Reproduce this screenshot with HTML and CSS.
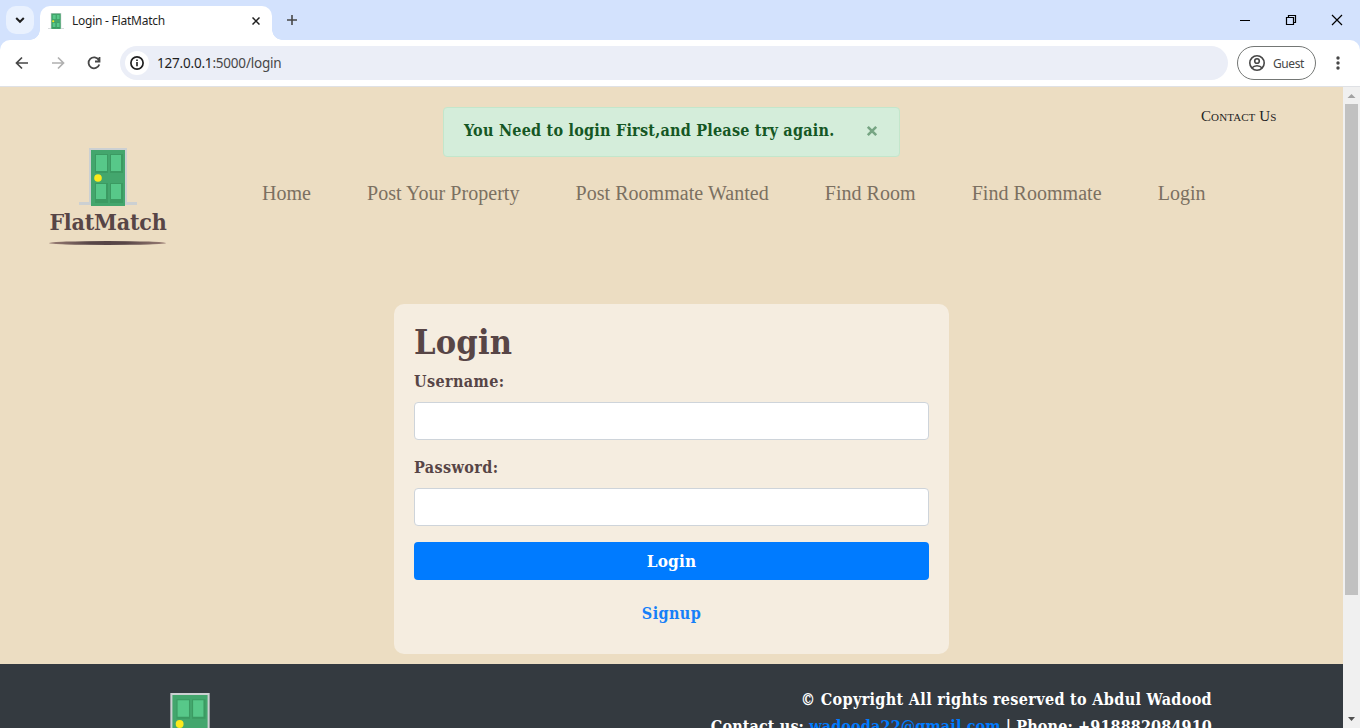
FILE: index.html
```html
<!DOCTYPE html>
<html lang="en">
<head>
<meta charset="utf-8">
<title>Login - FlatMatch</title>
<link rel="stylesheet" href="styles.css">
</head>
<body>
<svg class="defs" width="0" height="0">
  <symbol id="door" viewBox="0 0 58 58">
    <path fill="#ccd0d2" d="M10 0h38v54h10v3H0v-3h10z"/>
    <path fill="#43a66d" d="M12 2h34v56H12z"/>
    <path fill="#3b9a62" d="M16 6h13v19H16zM31 6h13v19H31zM16 35h13v20H16zM31 35h13v20H31z"/>
    <path fill="#57c889" d="M17 7h11v16H17zM32 7h10v16H32zM17 36h10v15H17zM32 36h10v15H32z"/>
    <circle cx="19" cy="30" r="3.8" fill="#fdea1c"/>
  </symbol>
</svg>
<div class="window">
  <div class="tabstrip">
    <div class="tab-search"><svg width="10" height="10" viewBox="0 0 10 10"><path d="M1.2 3l3.8 3.8L8.8 3" fill="none" stroke="#1f1f1f" stroke-width="2"/></svg></div>
    <div class="tab">
      <svg class="favicon" width="16" height="16"><use href="#door"/></svg>
      <span class="tab-title">Login - FlatMatch</span>
      <svg class="tab-close" width="8" height="8" viewBox="0 0 8 8"><path d="M.5.5l7 7M7.5.5l-7 7" stroke="#1f1f1f" stroke-width="1.5"/></svg>
    </div>
    <svg class="new-tab" width="12" height="12" viewBox="0 0 12 12"><path d="M6 1v10M1 6h10" stroke="#474747" stroke-width="1.6"/></svg>
    <div class="controls">
      <svg width="12" height="12"><path d="M1 6.5h10" stroke="#000"/></svg>
      <svg width="12" height="12" viewBox="0 0 12 12"><path d="M1.500 3.500h7v7h-7zM3.500 3V1.500h7v7H9" fill="none" stroke="#000" stroke-width="1.2"/></svg>
      <svg width="12" height="12"><path d="M1 1l10 10M11 1L1 11" stroke="#000" stroke-width="1.2"/></svg>
    </div>
  </div>
  <div class="toolbar">
    <svg class="nav-icon" width="16" height="16" viewBox="0 0 16 16"><path d="M14 8H3M8 2.500L2.500 8 8 13.500" fill="none" stroke="#474747" stroke-width="1.7"/></svg>
    <svg class="nav-icon" width="16" height="16" viewBox="0 0 16 16"><path d="M2 8h11M8 2.500L13.500 8 8 13.500" fill="none" stroke="#b0b0b0" stroke-width="1.7"/></svg>
    <svg class="nav-icon" width="16" height="16" viewBox="0 0 16 16"><path d="M12.800 5A5.500 5.500 0 1 0 13.300 9.500M13.500 2v4.500H9" fill="none" stroke="#474747" stroke-width="1.8"/></svg>
    <div class="omnibox">
      <span class="site-info"><svg width="16" height="16" viewBox="0 0 16 16"><circle cx="8" cy="8" r="6.100" fill="none" stroke="#1f1f1f" stroke-width="1.700"/><path d="M8 7v4.200M8 4.500v1.600" stroke="#1f1f1f" stroke-width="1.600"/></svg></span>
      <span class="url"><b>127.0.0.1</b>:5000/login</span>
    </div>
    <div class="guest">
      <svg width="18" height="18" viewBox="0 0 18 18" fill="none" stroke="#474747" stroke-width="1.600"><circle cx="9" cy="9" r="7.200"/><circle cx="9" cy="7" r="2.300"/><path d="M3.800 14c2.700-3 7.700-3 10.400 0"/></svg>
      <span>Guest</span>
    </div>
    <svg class="menu" width="4" height="14" fill="#474747"><circle cx="2" cy="2" r="1.700"/><circle cx="2" cy="7" r="1.700"/><circle cx="2" cy="12" r="1.700"/></svg>
  </div>
  <div class="viewport">
    <div class="page">
      <header class="header">
        <div class="notice-row">
          <div class="alert"><span class="alert-text">You Need to login First,and Please try again.</span><svg width="12" height="12" viewBox="0 0 12 12"><path d="M1.800 1.800l8.400 8.400M10.200 1.800l-8.400 8.400" stroke="#76a583" stroke-width="2.600"/></svg></div>
          <a class="contact">Contact Us</a>
        </div>
        <div class="navbar">
          <div class="brand">
            <svg class="brand-logo" width="58" height="58"><use href="#door"/></svg>
            <span class="brand-name">FlatMatch</span>
            <span class="brand-line"></span>
          </div>
          <nav class="links"><a>Home</a><a>Post Your Property</a><a>Post Roommate Wanted</a><a>Find Room</a><a>Find Roommate</a><a>Login</a></nav>
        </div>
      </header>
      <main class="card">
        <h1 class="title">Login</h1>
        <label class="label">Username:</label>
        <input class="field">
        <label class="label">Password:</label>
        <input class="field">
        <button class="submit">Login</button>
        <a class="signup">Signup</a>
      </main>
      <footer class="footer">
        <svg class="footer-logo" width="62" height="60"><use href="#door"/></svg>
        <div class="credits">
          <div class="copy">© Copyright All rights reserved to Abdul Wadood</div>
          <div class="reach">Contact us: <a>wadooda22@gmail.com</a> | Phone: +918882084910</div>
        </div>
      </footer>
    </div>
    <div class="scrollbar">
      <svg width="17" height="17"><path d="M4.500 11l4-4 4 4z" fill="#a3a3a3"/></svg>
      <div class="thumb"></div>
      <svg class="down" width="17" height="17"><path d="M5 6h7l-3.500 4z" fill="#505050"/></svg>
    </div>
  </div>
</div>
</body>
</html>
```
FILE: styles.css
```css
:root { --display: "DejaVu Serif Condensed", "DejaVu Serif", serif; }
* { box-sizing: border-box; }
body { margin: 0; overflow: hidden; }
svg { display: block; flex: none; }
.defs { position: absolute; }
.window { width: 1360px; height: 728px; display: flex; flex-direction: column; overflow: hidden; background: #d3e2fd; font-family: "Noto Sans", sans-serif; white-space: nowrap; }
.tabstrip { height: 40px; flex: none; display: flex; align-items: center; padding-left: 6px; }
.tab-search { width: 28px; height: 28px; border-radius: 10px; background: #e9f1fe; display: grid; place-items: center; }
.tab { position: relative; width: 232px; height: 34px; margin: 6px 0 0 6px; border-radius: 10px 10px 0 0; background: #fff; display: flex; align-items: center; padding: 0 12px 5px 8px; }
.tab::before, .tab::after { content: ""; position: absolute; bottom: 0; width: 10px; height: 10px; }
.tab::before { left: -10px; background: radial-gradient(circle at 0 0, transparent 9.5px, #fff 10px); }
.tab::after { right: -10px; background: radial-gradient(circle at 100% 0, transparent 9.5px, #fff 10px); }
.tab-title { margin-left: 8px; font-size: 12px; letter-spacing: -.24px; color: #1f1f1f; }
.tab-close { margin-left: auto; }
.new-tab { margin-left: 14px; }
.controls { margin-left: auto; margin-right: 17px; display: flex; gap: 34px; }
.toolbar { height: 47px; flex: none; background: #fff; border-radius: 10px 10px 0 0; border-bottom: 1px solid #dfe1e5; display: flex; align-items: center; padding-left: 14px; }
.nav-icon { margin-right: 20px; }
.omnibox { width: 1108px; height: 34px; margin-left: -2px; border-radius: 17px; background: #ebeef7; display: flex; align-items: center; padding-left: 5px; }
.site-info { width: 24px; height: 24px; border-radius: 50%; background: #fff; display: grid; place-items: center; }
.url { margin-left: 8px; font-size: 13.5px; letter-spacing: -.2px; color: #474747; }
.url b { font-weight: 400; color: #1f1f1f; }
.guest { width: 79px; height: 34px; margin-left: 9px; border: 1px solid #747775; border-radius: 17px; display: flex; align-items: center; gap: 7px; padding-left: 10px; font-size: 12px; letter-spacing: -.4px; color: #474747; }
.menu { margin-left: 20px; }
.viewport { flex: 1; min-height: 0; display: flex; }
.page { width: 1343px; background: #ecddc2; overflow: hidden; }
.header { height: 217px; }
.notice-row { height: 70px; padding-top: 20px; display: flex; align-items: flex-start; }
.alert { width: 457px; height: 50px; margin-left: 443px; border: 1px solid #c3e6cb; border-radius: 4px; background: #d4edda; color: #155724; display: flex; align-items: center; justify-content: space-between; padding: 0 21px 3px 20px; font: 700 16px var(--display); font-stretch: condensed; letter-spacing: .23px; }
.alert-text { width: 371px; }
.contact { margin: 0 0 0 301px; font: small-caps 400 15px/19px "Liberation Serif", serif; letter-spacing: .1px; color: #222; }
.navbar { display: flex; padding: 0 50px; margin-top: -8px; }
.brand { width: 117px; display: flex; flex-direction: column; align-items: center; }
.brand-logo { margin: -1px 2px 0 0; }
.brand-name { height: 31px; font: 700 23px/31px var(--display); font-stretch: condensed; letter-spacing: -.2px; margin-right: 1px; color: #574546; }
.brand-line { width: 117px; height: 4px; margin: 4px 2px 0 0; border-radius: 50%; background: linear-gradient(90deg, #9b7e75, #574546 35%, #574546 65%, #9b7e75); }
.links { display: flex; gap: 56px; margin: 33px 0 0 95px; font: 20px/23px "Liberation Serif", serif; letter-spacing: .04px; color: #7b7061; }
.card { width: 555px; height: 350px; margin-left: 394px; padding: 20px; border-radius: 10px; background: #f5ede0; color: #574546; font: 700 16px/24px var(--display); font-stretch: condensed; letter-spacing: .4px; display: flex; flex-direction: column; }
.title { margin: 0; font-size: 34px; line-height: 36px; height: 46px; letter-spacing: .2px; }
.label { height: 24px; margin-bottom: 8px; }
.field { width: 515px; height: 38px; margin: 0 0 16px; border: 1px solid #ced4da; border-radius: 4px; background: #fff; flex: none; }
.submit { height: 38px; flex: none; border: 0; border-radius: 4px; background: #007bff; color: #fff; font: 700 17px var(--display); font-stretch: condensed; letter-spacing: .2px; }
.signup { margin-top: 22px; text-align: center; color: #167ff8; }
.footer { height: 160px; margin-top: 10px; background: #343a40; display: flex; justify-content: space-between; padding: 23px 131px 0 159px; color: #fff; font: 700 16px/26px var(--display); font-stretch: condensed; letter-spacing: .33px; }
.footer-logo { margin-top: 6px; }
.reach { line-height: 28px; letter-spacing: .13px; }
.credits { text-align: right; }
.credits a { color: #007bff; }
.scrollbar { width: 17px; background: #f0f0f0; display: flex; flex-direction: column; }
.thumb { width: 13px; height: 491px; margin-left: 2px; background: #c1c1c1; }
.down { margin-top: auto; }
```
